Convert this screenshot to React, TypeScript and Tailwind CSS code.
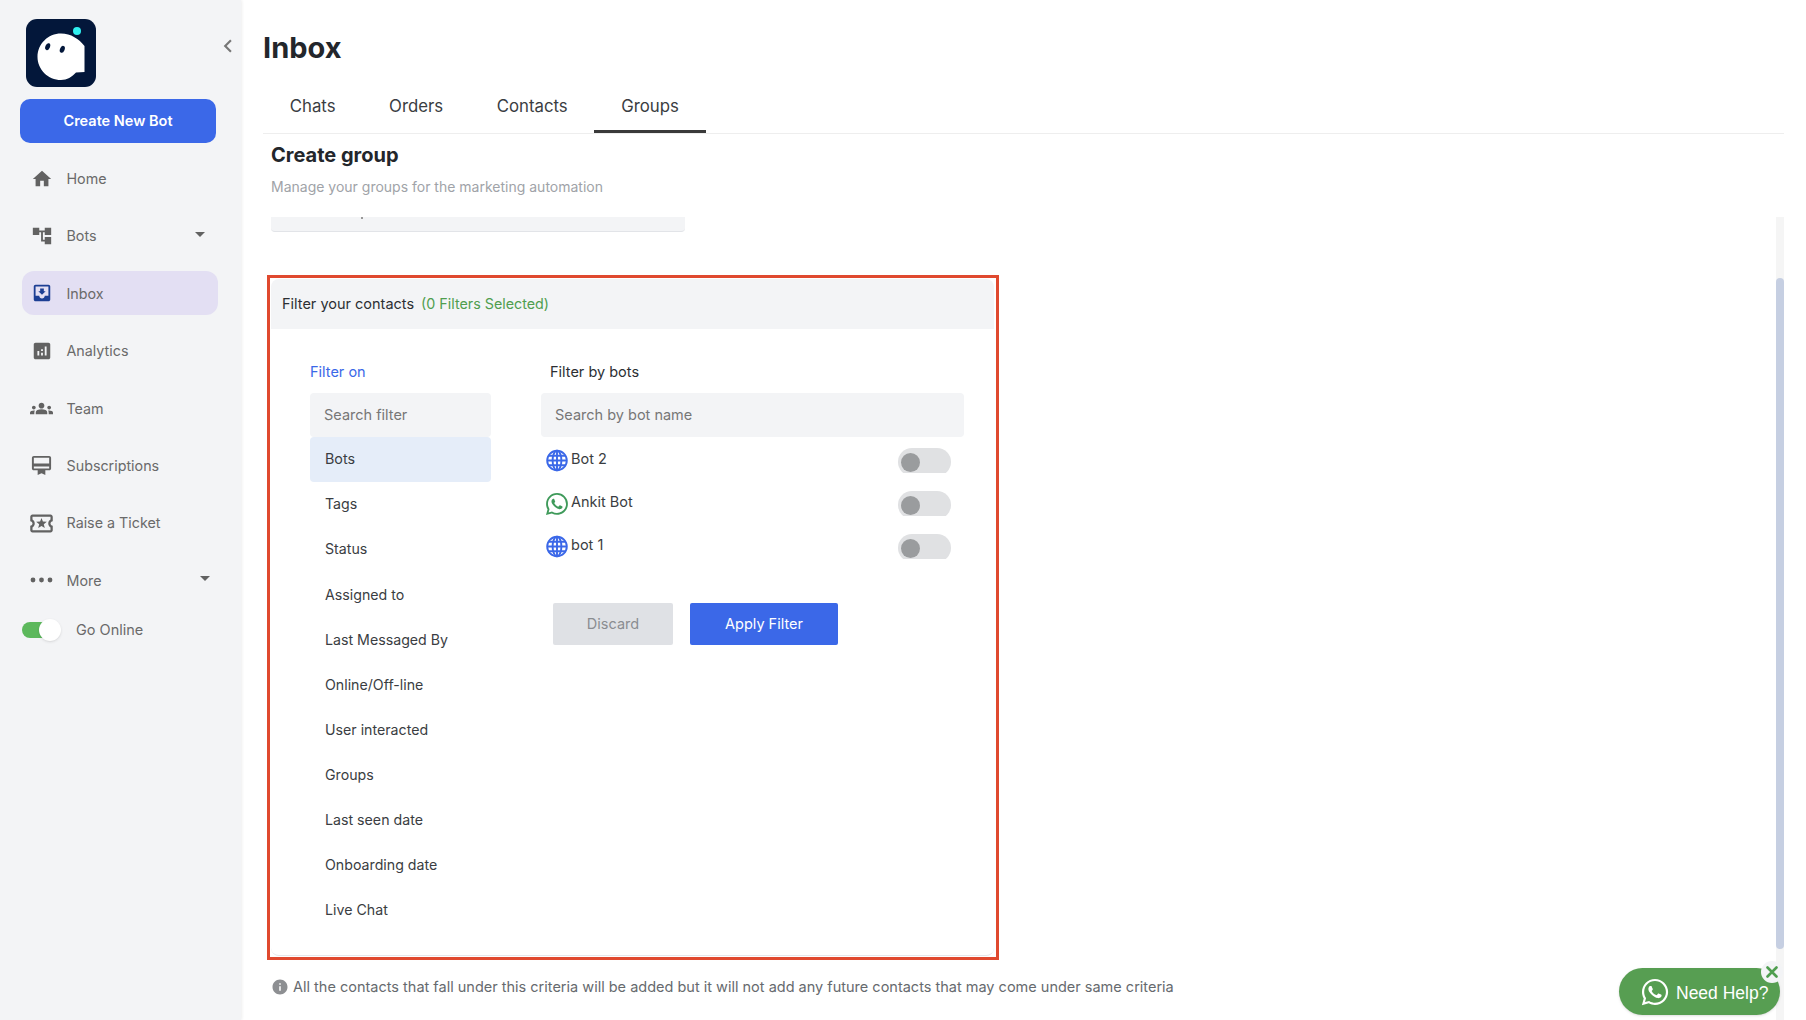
import React from "react";
import {
  MdAccountTree,
  MdAnalytics,
  MdArrowDropDown,
  MdCardMembership,
  MdChevronLeft,
  MdGroups,
  MdHome,
  MdInfo,
  MdMoveToInbox,
  MdOutlineLocalActivity,
} from "react-icons/md";
import { FaWhatsapp } from "react-icons/fa";
import { BsWhatsapp } from "react-icons/bs";

function Dots() {
  return (
    <svg width="23" height="6" viewBox="0 0 23 6" fill="currentColor">
      <circle cx="3" cy="3" r="2.4" />
      <circle cx="11.5" cy="3" r="2.4" />
      <circle cx="20" cy="3" r="2.4" />
    </svg>
  );
}

const navItems = [
  { label: "Home", icon: <MdHome size={22} /> },
  { label: "Bots", icon: <MdAccountTree size={22} />, caret: "mr-[6px]" },
  { label: "Inbox", icon: <MdMoveToInbox size={22} className="text-[#1c3f94]" />, active: true },
  { label: "Analytics", icon: <MdAnalytics size={22} /> },
  { label: "Team", icon: <MdGroups size={23} /> },
  { label: "Subscriptions", icon: <MdCardMembership size={23} /> },
  { label: "Raise a Ticket", icon: <MdOutlineLocalActivity size={27} /> },
  { label: "More", icon: <Dots />, caret: "mr-[1px]" },
];

const filters = [
  "Tags",
  "Status",
  "Assigned to",
  "Last Messaged By",
  "Online/Off-line",
  "User interacted",
  "Groups",
  "Last seen date",
  "Onboarding date",
  "Live Chat",
];

const bots = [
  { name: "Bot 2", kind: "web" },
  { name: "Ankit Bot", kind: "whatsapp" },
  { name: "bot 1", kind: "web" },
];

function Logo() {
  return (
    <svg width="70" height="68" viewBox="0 0 70 68" className="ml-[26px] block">
      <rect width="70" height="68" rx="11" fill="#03173a" />
      <path
        d="M35 14.5C45 14.5 53 20 58.5 27L58.5 53L50 53.5C46 58 41 61 35 61C22 61 11.5 50.5 11.5 38C11.5 25 22 14.5 35 14.5Z"
        fill="#fff"
      />
      <ellipse cx="21.7" cy="27.7" rx="2.3" ry="3.6" transform="rotate(22 21.7 27.7)" fill="#03173a" />
      <ellipse cx="36.3" cy="30.3" rx="2.3" ry="3.6" transform="rotate(22 36.3 30.3)" fill="#03173a" />
      <circle cx="51" cy="12" r="4" fill="#2ff0f0" />
    </svg>
  );
}

function GlobeIcon() {
  return (
    <svg width="22" height="23" viewBox="0 0 22 22" fill="none" stroke="#3b68e8" strokeWidth="1.9">
      <circle cx="11" cy="11" r="9.8" />
      <ellipse cx="11" cy="11" rx="4.4" ry="9.8" />
      <path d="M11 1.2V20.8M1.2 11H20.8M2.6 6.2H19.4M2.6 15.8H19.4" />
    </svg>
  );
}

function Toggle() {
  return (
    <div className="h-[25px] w-[53px] overflow-hidden">
      <div className="flex h-[28px] w-[53px] items-center rounded-full bg-[#e0e1e3] pl-[3px]">
        <div className="h-[19px] w-[19px] rounded-full bg-[#9a9c9e]" />
      </div>
    </div>
  );
}

export default function App() {
  return (
    <div className="relative flex h-[1020px] w-[1806px] overflow-hidden bg-white font-['Inter',sans-serif]">
      <aside className="h-full w-[241px] shrink-0 bg-[#f3f4f6] pt-[19px] shadow-[1px_0_3px_rgba(0,0,0,0.07)]">
        <div className="relative">
          <Logo />
          <MdChevronLeft size={26} className="absolute left-[215px] top-[14px] text-[#777]" />
        </div>
        <button className="ml-[20px] mt-[12px] h-[44px] w-[196px] rounded-[10px] bg-[#3b68e8] text-[14.5px] font-semibold text-white">
          Create New Bot
        </button>
        <nav className="mt-[7px]">
          {navItems.map((item) => (
            <div key={item.label} className="flex h-[57.4px] items-center">
              <div
                className={`ml-[22px] flex h-[44px] w-[196px] items-center rounded-[12px] ${
                  item.active ? "bg-[#e3dff3]" : ""
                }`}
              >
                <div className="flex w-[38px] items-center justify-center pl-[1px] text-[#626262]">{item.icon}</div>
                <span className="ml-[6.5px] text-[14.3px] text-[#6a6a6a]">{item.label}</span>
                {item.caret && <MdArrowDropDown size={24} className={`ml-auto mb-[4px] text-[#626262] ${item.caret}`} />}
              </div>
            </div>
          ))}
        </nav>
        <div className="ml-[22px] mt-[9px] flex h-[24px] items-center">
          <div className="relative h-[16px] w-[34px] rounded-full bg-[#5cb85c]">
            <div className="absolute left-[17px] top-[-3px] h-[22px] w-[22px] rounded-full bg-white shadow" />
          </div>
          <span className="ml-[20px] text-[14.5px] text-[#6a6a6a]">Go Online</span>
        </div>
      </aside>

      <main className="flex h-full flex-1 flex-col pl-[22px] pr-[22px]">
        <div className="border-b border-[#eeeeee] pt-[28px]">
          <h1 className="text-[29px] font-bold leading-[40px] text-[#23262b]">Inbox</h1>
          <div className="mt-[12px] flex">
            {["Chats", "Orders", "Contacts", "Groups"].map((tab) => (
              <div
                key={tab}
                className={`flex h-[53px] items-center border-b-[3px] px-[26.75px] pt-[3px] text-[16.8px] text-[#3a3d42] ${
                  tab === "Groups" ? "border-[#3a3a3a]" : "border-transparent"
                }`}
              >
                {tab}
              </div>
            ))}
          </div>
        </div>

        <div className="flex min-h-0 flex-1">
          <div className="flex-1 overflow-hidden pl-[4px]">
            <div className="pl-[4px] pt-[7px]">
              <h2 className="text-[20px] font-bold leading-[28px] text-[#23262b]">Create group</h2>
              <p className="mt-[8px] text-[14px] leading-[20px] text-[#a0a3a8]">
                Manage your groups for the marketing automation
              </p>
              <div className="mt-[20px] h-[15px] w-[414px] rounded-b-[4px] border-b border-[#e2e4e8] bg-[#f3f4f6] pl-[90px]">
                <div className="h-[2px] w-[2px] bg-[#999]" />
              </div>
            </div>

            <section className="mt-[43px] h-[685px] w-[732px] border-[3px] border-[#e0492f] p-[1px]">
              <div className="h-full w-[723px] rounded-[8px] border-b border-[#e5e7eb]">
                <div className="flex h-[50px] items-center rounded-t-[8px] bg-[#f3f4f6] px-[11px] text-[14.3px]">
                  <span className="text-[14.5px] text-[#2c2f33]">Filter your contacts</span>
                  <span className="ml-[7px] text-[#4f9e4f]">(0 Filters Selected)</span>
                </div>
                <div className="flex pl-[39px] pt-[33px]">
                  <div className="w-[181px]">
                    <div className="h-[20px] text-[14.5px] leading-[20px] text-[#3b68e8]">Filter on</div>
                    <div className="mt-[11px] flex h-[44px] items-center rounded-[4px] bg-[#f3f4f6] px-[14px] text-[14.5px] text-[#777]">
                      Search filter
                    </div>
                    <div className="flex h-[45px] items-center rounded-[4px] bg-[#e5edf9] px-[15px] pb-[2px] text-[14.3px] text-[#3a3d42]">
                      Bots
                    </div>
                    {filters.map((name) => (
                      <div key={name} className="flex h-[45.1px] items-center px-[15px] pb-[1px] text-[14.2px] text-[#3a3d42]">
                        {name}
                      </div>
                    ))}
                  </div>

                  <div className="ml-[50px] w-[423px]">
                    <div className="h-[20px] pl-[9px] text-[14.5px] leading-[20px] text-[#2c2f33]">Filter by bots</div>
                    <div className="mt-[11px] flex h-[44px] items-center rounded-[4px] bg-[#f3f4f6] px-[14px] text-[14.5px] text-[#777]">
                      Search by bot name
                    </div>
                    <div className="mt-[11px] flex flex-col gap-[18px]">
                      {bots.map((bot) => (
                        <div key={bot.name} className="flex h-[25px] items-center pl-[5px] pr-[13px]">
                          {bot.kind === "web" ? <GlobeIcon /> : <BsWhatsapp size={22} className="text-[#3f9a5a]" />}
                          <span className="ml-[3px] mb-[3px] flex-1 text-[14.5px] text-[#3a3d42]">{bot.name}</span>
                          <Toggle />
                        </div>
                      ))}
                    </div>
                    <div className="ml-[12px] mt-[44px] flex gap-[17px]">
                      <button className="h-[42px] w-[120px] rounded-[2px] bg-[#dfe1e5] text-[14.5px] text-[#8a8d91]">
                        Discard
                      </button>
                      <button className="h-[42px] w-[148px] rounded-[2px] bg-[#3b68e8] text-[14.5px] text-white">
                        Apply Filter
                      </button>
                    </div>
                  </div>
                </div>
              </div>
            </section>

            <div className="ml-[4px] mt-[17px] flex h-[20px] items-center text-[14.5px] text-[#666a6e]">
              <MdInfo size={18} className="text-[#8d8f92]" />
              <span className="ml-[4px]">
                All the contacts that fall under this criteria will be added but it will not add any future contacts that may come under same criteria
              </span>
            </div>
          </div>

          <div className="mt-[83px] w-[8px] bg-[#f5f5f5] pt-[61px]">
            <div className="h-[671px] rounded-full bg-[#c6cfe2]" />
          </div>
        </div>
      </main>

      <div className="absolute bottom-[5px] right-[26px] flex h-[47px] w-[161px] items-center rounded-full bg-[#579e52] pl-[21px] text-white shadow-sm">
        <FaWhatsapp size={30} />
        <span className="ml-[6px] mt-[3px] font-['Liberation_Sans',sans-serif] text-[17.5px]">Need Help?</span>
        <div className="absolute right-[-3px] top-[-7px] flex h-[22px] w-[22px] items-center justify-center rounded-full bg-[#f3f4f6]">
          <svg width="12" height="12" viewBox="0 0 12 12" stroke="#4f9e4f" strokeWidth="2.6" strokeLinecap="round">
            <path d="M1.5 1.5L10.5 10.5M10.5 1.5L1.5 10.5" />
          </svg>
        </div>
      </div>
    </div>
  );
}
